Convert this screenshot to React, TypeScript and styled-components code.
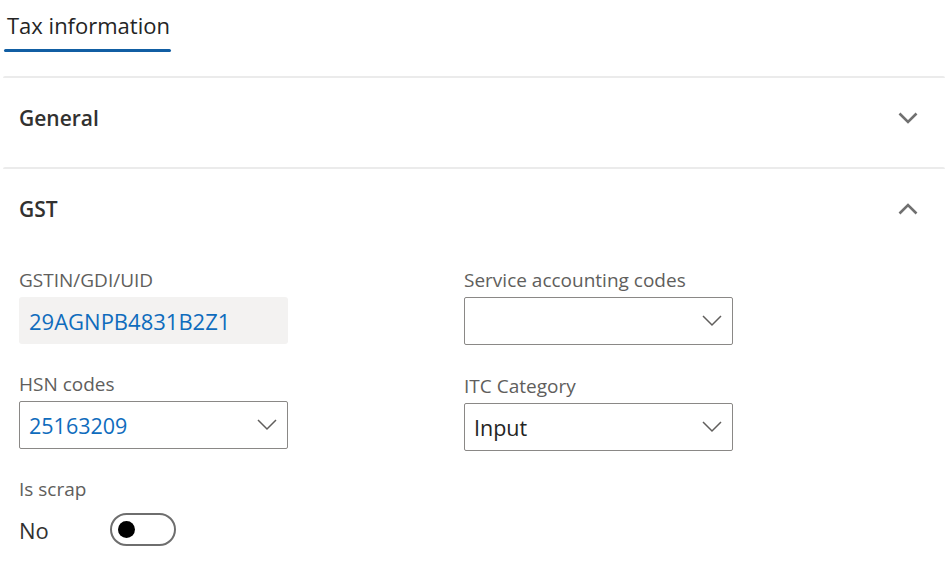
import React from "react";
import styled, { createGlobalStyle } from "styled-components";

const GlobalStyle = createGlobalStyle`
  html, body {
    margin: 0;
    padding: 0;
    background: #ffffff;
  }
  body {
    font-family: "Open Sans", "Noto Sans", "Liberation Sans", sans-serif;
    color: #323130;
  }
`;

const Page = styled.div`
  width: 948px;
  padding: 0 3px;
  box-sizing: border-box;
`;

const TabBar = styled.div`
  height: 76px;
  display: flex;
  align-items: flex-start;
  padding-left: 1px;
`;

const Tab = styled.div`
  position: relative;
  padding: 10px 1px 0 3px;
  height: 42px;
  font-size: 22px;
  line-height: 30px;
  color: #242424;
  &::after {
    content: "";
    position: absolute;
    left: 0;
    right: 0;
    bottom: 0;
    height: 3px;
    border-radius: 2px;
    background: #115ea3;
  }
`;

const Section = styled.section<{ $open?: boolean }>`
  border-top: 2px solid #ebebeb;
  border-radius: 2px 2px 0 0;
  padding-bottom: ${(p) => (p.$open ? "20px" : "0")};
`;

const SectionHeader = styled.div<{ $open?: boolean }>`
  display: flex;
  align-items: center;
  justify-content: space-between;
  padding: 25px 27px ${(p) => (p.$open ? "44px" : "34px")} 16px;
  font-size: 21px;
  line-height: 30px;
  font-weight: 600;
  color: #323130;
`;

const FieldGrid = styled.div`
  display: grid;
  grid-template-columns: 269px 269px;
  column-gap: 176px;
  padding-left: 16px;
  align-items: start;
`;

const FieldColumn = styled.div<{ $gap: number }>`
  display: flex;
  flex-direction: column;
  gap: ${(p) => p.$gap}px;
`;

const Field = styled.div`
  display: flex;
  flex-direction: column;
`;

const Label = styled.div`
  font-size: 19px;
  line-height: 24px;
  color: #605e5c;
  padding-bottom: 5px;
`;

const ReadOnlyBox = styled.div`
  height: 47px;
  box-sizing: border-box;
  background: #f3f2f1;
  border-radius: 3px;
  padding: 0 10px;
  display: flex;
  align-items: center;
  font-size: 22px;
  color: #0f6cbd;
`;

const SelectBox = styled.div<{ $link?: boolean }>`
  height: 48px;
  box-sizing: border-box;
  border: 1px solid #8a8886;
  border-radius: 2px;
  padding: 0 10px 0 9px;
  display: flex;
  align-items: center;
  justify-content: space-between;
  font-size: 21.5px;
  color: ${(p) => (p.$link ? "#0f6cbd" : "#242424")};
`;

const ToggleRow = styled.div`
  display: flex;
  align-items: center;
  height: 33px;
  margin-top: 7px;
`;

const ToggleText = styled.span`
  width: 91px;
  font-size: 22px;
  color: #323130;
`;

const ToggleTrack = styled.div<{ $on?: boolean }>`
  position: relative;
  width: 66px;
  height: 33px;
  box-sizing: border-box;
  border: 2px solid #6e6e6e;
  border-radius: 17px;
  &::after {
    content: "";
    position: absolute;
    top: 6px;
    left: ${(p) => (p.$on ? "39px" : "6px")};
    width: 17px;
    height: 17px;
    border-radius: 50%;
    background: #000000;
  }
`;

const Chevron = ({ up, small }: { up?: boolean; small?: boolean }) =>
  small ? (
    <svg width="20" height="12" viewBox="0 0 20 12" aria-hidden="true">
      <polyline
        points={up ? "1,11 10,2 19,11" : "1,1 10,10 19,1"}
        fill="none"
        stroke="#605e5c"
        strokeWidth="1.5"
      />
    </svg>
  ) : (
    <svg width="20" height="12" viewBox="0 0 20 12" aria-hidden="true">
      <polyline
        points={up ? "1.5,10.5 10,2 18.5,10.5" : "1.5,1.5 10,10 18.5,1.5"}
        fill="none"
        stroke="#707070"
        strokeWidth="2.6"
      />
    </svg>
  );

export default function App() {
  return (
    <>
      <GlobalStyle />
      <Page>
        <TabBar>
          <Tab>Tax information</Tab>
        </TabBar>
        <Section>
          <SectionHeader>
            <span>General</span>
            <Chevron />
          </SectionHeader>
        </Section>
        <Section $open>
          <SectionHeader $open>
            <span>GST</span>
            <Chevron up />
          </SectionHeader>
          <FieldGrid>
            <FieldColumn $gap={28}>
              <Field>
                <Label>GSTIN/GDI/UID</Label>
                <ReadOnlyBox>29AGNPB4831B2Z1</ReadOnlyBox>
              </Field>
              <Field>
                <Label>HSN codes</Label>
                <SelectBox $link>
                  <span>25163209</span>
                  <Chevron small />
                </SelectBox>
              </Field>
              <Field>
                <Label>Is scrap</Label>
                <ToggleRow>
                  <ToggleText>No</ToggleText>
                  <ToggleTrack />
                </ToggleRow>
              </Field>
            </FieldColumn>
            <FieldColumn $gap={29}>
              <Field>
                <Label>Service accounting codes</Label>
                <SelectBox>
                  <span></span>
                  <Chevron small />
                </SelectBox>
              </Field>
              <Field>
                <Label>ITC Category</Label>
                <SelectBox>
                  <span>Input</span>
                  <Chevron small />
                </SelectBox>
              </Field>
            </FieldColumn>
          </FieldGrid>
        </Section>
      </Page>
    </>
  );
}
